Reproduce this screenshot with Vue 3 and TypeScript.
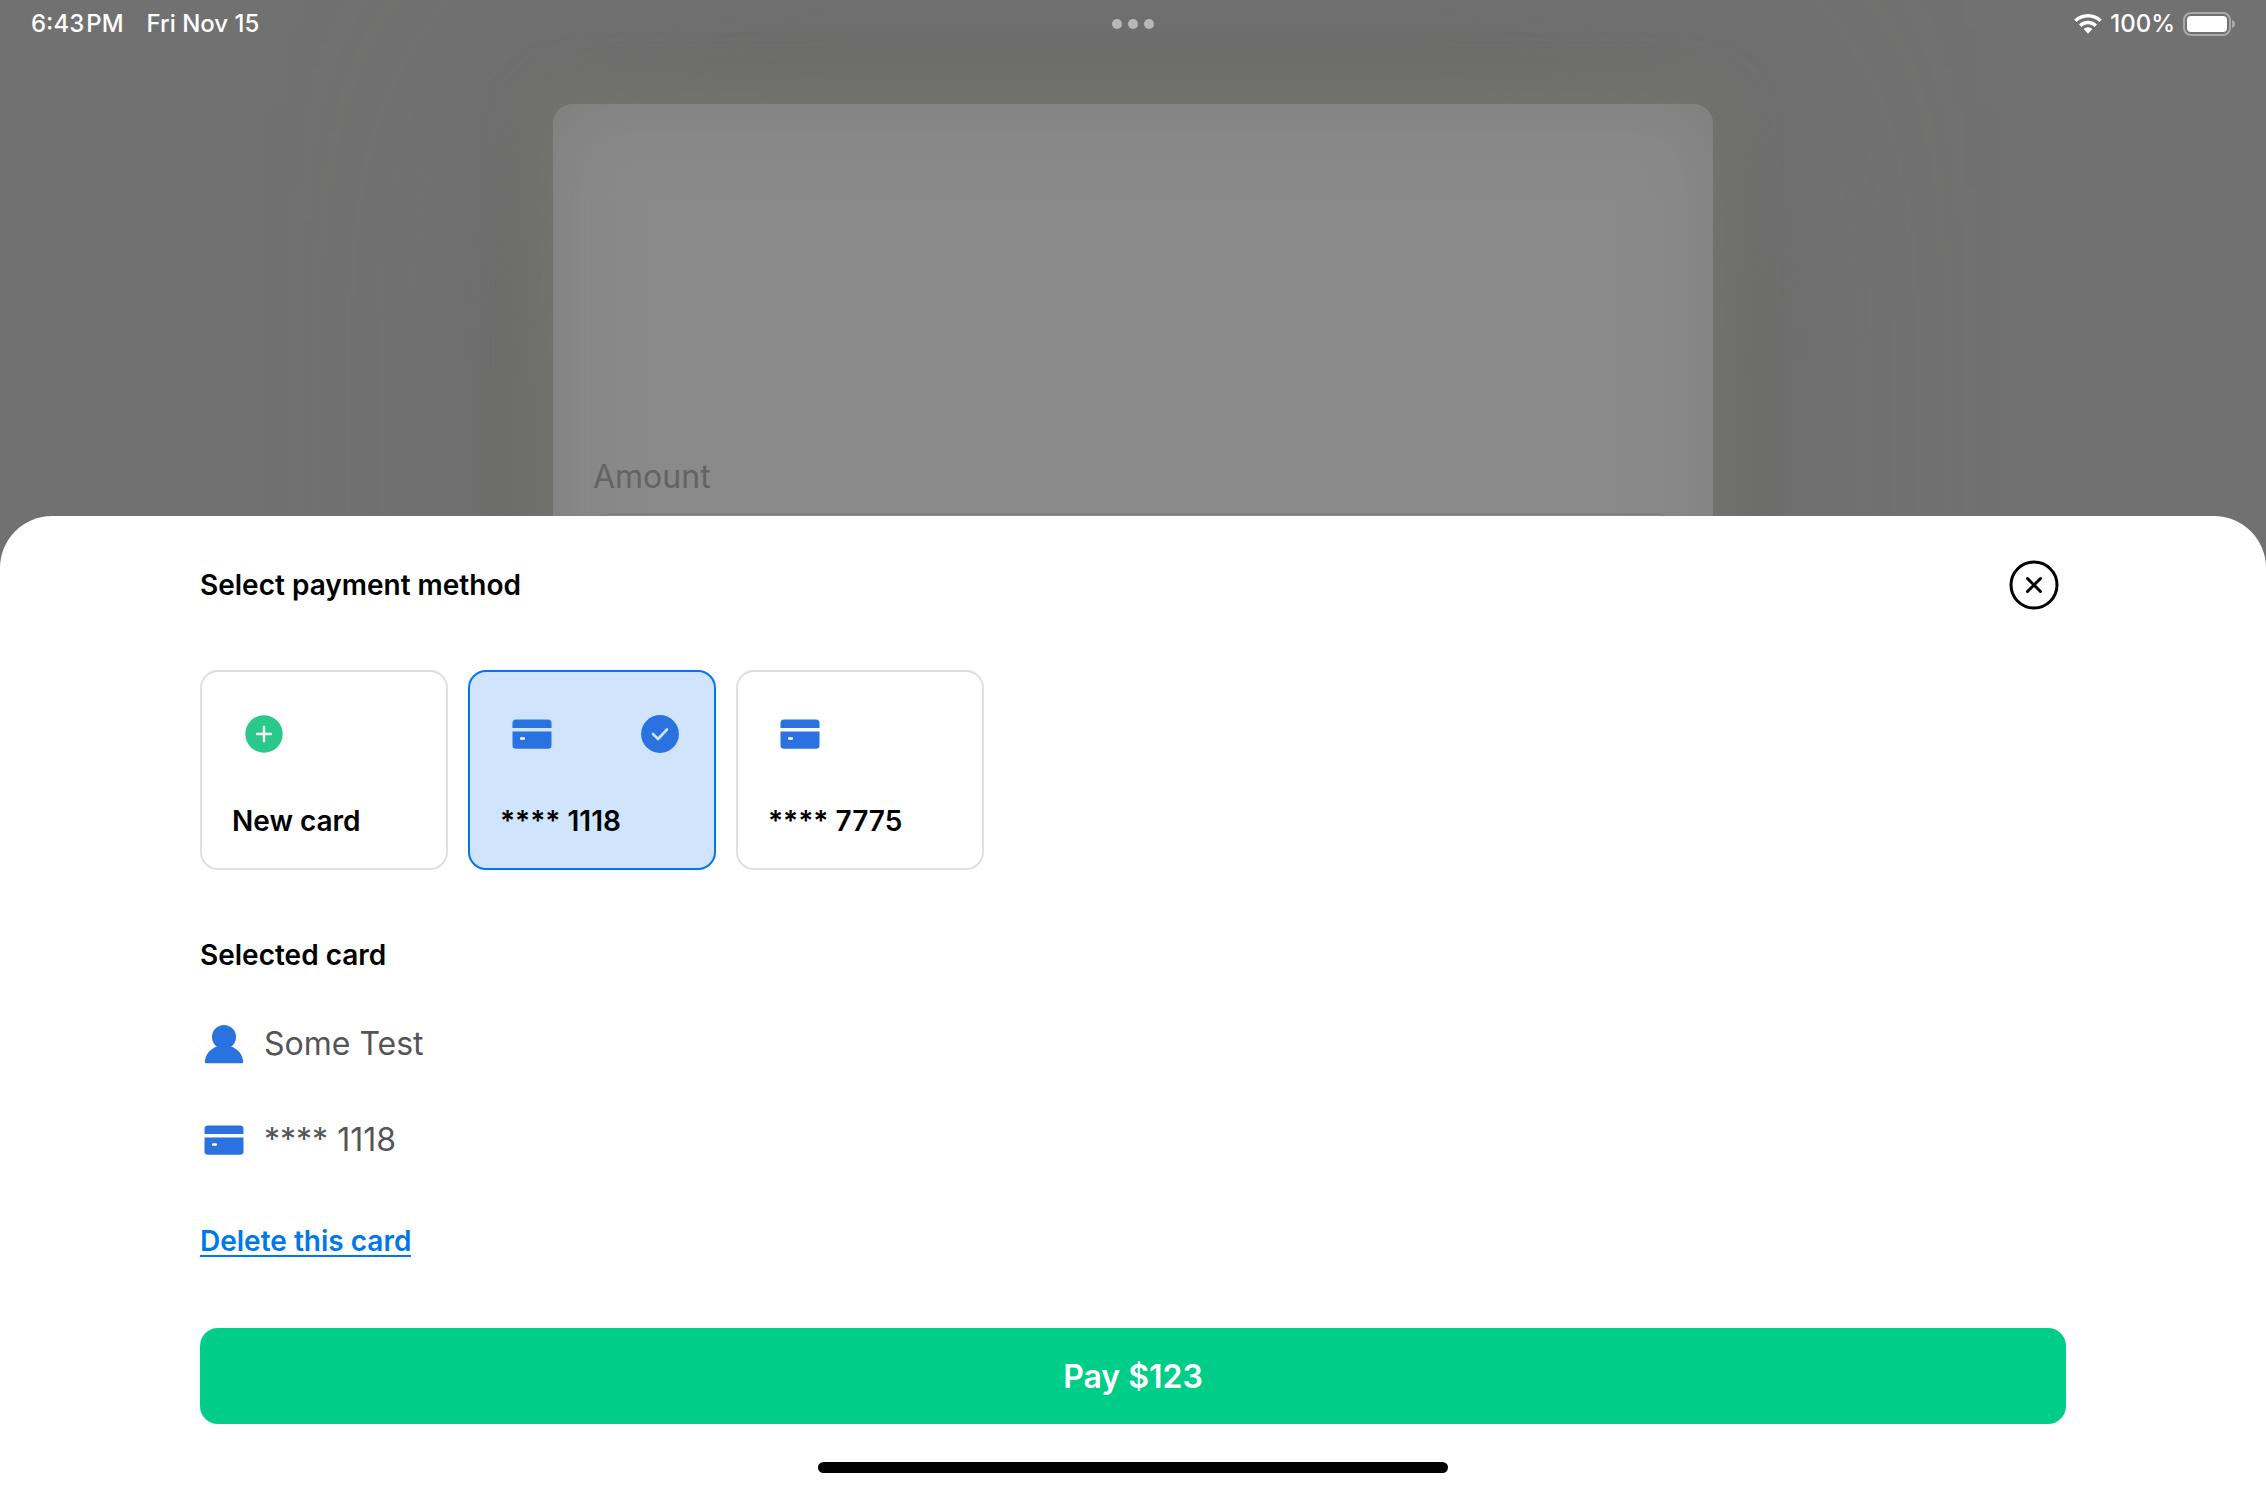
<script setup lang="ts">
import { computed, ref } from 'vue'

interface SavedCard {
  id: string
  holder: string
  label: string
}

const cards: SavedCard[] = [
  { id: 'card-1118', holder: 'Some Test', label: '**** 1118' },
  { id: 'card-7775', holder: 'Some Test', label: '**** 7775' },
]

const selectedId = ref<string>('card-1118')
const amount = ref<string>('')
const selected = computed<SavedCard>(() => cards.find((c) => c.id === selectedId.value) ?? cards[0])
</script>

<template>
  <div class="screen">
    <div class="stage">
      <header class="status">
        <div class="status-side">
          <span>6:43&#8202;PM</span>
          <span>Fri Nov 15</span>
        </div>
        <div class="dots"><i></i><i></i><i></i></div>
        <div class="status-side status-end">
          <svg class="wifi" viewBox="0 0 28 20" aria-hidden="true">
            <path d="M14 0C8.600 0 3.700 2.100.200 5.500L2.600 8C5.500 5.100 9.500 3.500 14 3.500S22.500 5.100 25.400 8L27.800 5.500C24.300 2.100 19.400 0 14 0Z" />
            <path d="M14 6.800C10.500 6.800 7.300 8.200 5 10.400L7.500 12.900C9.200 11.200 11.500 10.200 14 10.200S18.800 11.200 20.500 12.900L23 10.400C20.700 8.200 17.500 6.800 14 6.800Z" />
            <path d="M14 13.300C12.300 13.300 10.800 14 9.700 15.100L14 19.700L18.300 15.100C17.200 14 15.700 13.300 14 13.300Z" />
          </svg>
          <span class="charge">100%</span>
          <svg class="battery" viewBox="0 0 52 24" aria-hidden="true">
            <rect x="1" y="1" width="46" height="22" rx="7" fill="none" stroke="#a9a9a9" stroke-width="2" />
            <rect x="4" y="4" width="40" height="16" rx="4" />
            <path d="M49 8C51.500 8.800 52 10.200 52 12S51.500 15.200 49 16Z" fill="#a9a9a9" />
          </svg>
        </div>
      </header>

      <section class="panel">
        <label class="amount-label" for="amount">Amount</label>
        <input id="amount" v-model="amount" class="amount-input" type="text" />
      </section>
    </div>

    <main class="sheet">
      <div class="sheet-head">
        <h1 class="heading">Select payment method</h1>
        <button class="close" type="button" aria-label="Close">
          <svg viewBox="0 0 64 64" fill="none" stroke="#000" stroke-width="3" stroke-linecap="round">
            <circle cx="32" cy="32" r="23" />
            <path d="M25.500 25.500L38.500 38.500M38.500 25.500L25.500 38.500" />
          </svg>
        </button>
      </div>

      <div class="methods">
        <button class="method" type="button">
          <span class="method-icons">
            <svg class="icon" viewBox="0 0 48 48" aria-hidden="true">
              <circle cx="24" cy="24" r="18.700" fill="#2bc88c" />
              <path d="M24 17V31M17 24H31" stroke="#fff" stroke-width="2.400" stroke-linecap="round" />
            </svg>
          </span>
          <span>New card</span>
        </button>

        <label v-for="card in cards" :key="card.id" class="method" :class="{ chosen: card.id === selectedId }">
          <input v-model="selectedId" class="radio" type="radio" name="method" :value="card.id" />
          <span class="method-icons">
            <svg class="icon" viewBox="0 0 48 48" aria-hidden="true">
              <path d="M4.500 18V13Q4.500 9.500 8 9.500H40Q43.500 9.500 43.500 13V18Z" fill="#2972e0" />
              <path d="M4.500 21.500H43.500V35.500Q43.500 38.700 40 38.700H8Q4.500 38.700 4.500 35.500Z" fill="#2972e0" />
              <rect x="12" y="27.300" width="5" height="2.400" rx="1" fill="#fff" />
            </svg>
            <svg v-if="card.id === selectedId" class="icon" viewBox="0 0 48 48" aria-hidden="true">
              <circle cx="24" cy="24" r="18.900" fill="#2972e0" />
              <path d="M17 24L22 29L31 19.500" fill="none" stroke="#d0e4fc" stroke-width="2.600" stroke-linecap="round" stroke-linejoin="round" />
            </svg>
          </span>
          <span>{{ card.label }}</span>
        </label>
      </div>

      <h2 class="heading">Selected card</h2>
      <ul class="details">
        <li>
          <svg class="icon" viewBox="0 0 48 48" aria-hidden="true">
            <circle cx="24" cy="17" r="12" fill="#2972e0" />
            <path d="M17 26.500C10 29 5.500 34.500 4.800 41.500Q4.700 43.200 6 43.200H42Q43.300 43.200 43.200 41.500C42.500 34.500 38 29 31 26.500Z" fill="#2972e0" />
          </svg>
          <span>{{ selected.holder }}</span>
        </li>
        <li>
          <svg class="icon" viewBox="0 0 48 48" aria-hidden="true">
            <path d="M4.500 18V13Q4.500 9.500 8 9.500H40Q43.500 9.500 43.500 13V18Z" fill="#2972e0" />
            <path d="M4.500 21.500H43.500V35.500Q43.500 38.700 40 38.700H8Q4.500 38.700 4.500 35.500Z" fill="#2972e0" />
            <rect x="12" y="27.300" width="5" height="2.400" rx="1" fill="#fff" />
          </svg>
          <span>{{ selected.label }}</span>
        </li>
      </ul>

      <a class="delete" href="#delete">Delete this card</a>
      <button class="pay" type="button">Pay $123</button>
      <div class="home-bar"></div>
    </main>
  </div>
</template>

<style>
body {
  background: #717171;
}
</style>

<style scoped>
.screen {
  display: flex;
  flex-direction: column;
  height: 100vh;
  font-family: Inter, "Liberation Sans", sans-serif;
  color: #000;
}
.stage {
  flex: 1;
  display: flex;
  flex-direction: column;
  align-items: center;
  min-height: 300px;
  overflow: hidden;
}
.status {
  position: relative;
  z-index: 1;
  flex: none;
  display: grid;
  grid-template-columns: 1fr auto 1fr;
  align-items: center;
  box-sizing: border-box;
  width: 100%;
  height: 48px;
  padding: 0 31px;
  font-size: 24px;
  font-weight: 500;
  line-height: 32px;
  color: #fff;
}
.status-side {
  display: flex;
  align-items: center;
  gap: 23px;
}
.status-end {
  justify-content: flex-end;
  gap: 8px;
}
.wifi {
  width: 28px;
  height: 20px;
  fill: #fff;
}
.battery {
  width: 52px;
  height: 24px;
  fill: #fff;
}
.dots {
  display: flex;
  gap: 6px;
}
.dots i {
  width: 10px;
  height: 10px;
  border-radius: 50%;
  background: #b8b8b8;
}
.panel {
  flex: none;
  display: flex;
  flex-direction: column;
  box-sizing: border-box;
  width: 100%;
  max-width: 1160px;
  margin-top: 56px;
  padding: 353px 40px 300px;
  border-radius: 20px;
  background: #8a8a8a;
  box-shadow:
    inset 0 0 80px #7e7e7e,
    0 0 60px #787873,
    0 0 240px #676965;
}
.amount-label {
  font-size: 32px;
  line-height: 40px;
  color: #636363;
}
.amount-input {
  box-sizing: border-box;
  height: 96px;
  margin-top: 16px;
  padding: 0 32px;
  border: 2px solid #808080;
  border-radius: 16px;
  background: transparent;
  font: inherit;
  font-size: 32px;
}
.sheet {
  flex: none;
  display: flex;
  flex-direction: column;
  padding: 37px 200px 15px;
  border-radius: 52px 52px 0 0;
  background: #fff;
}
.sheet-head {
  display: flex;
  align-items: center;
  justify-content: space-between;
}
.heading {
  margin: 0;
  font-size: 28px;
  font-weight: 600;
  line-height: 40px;
}
.close {
  width: 64px;
  height: 64px;
  padding: 0;
  border: 0;
  background: none;
}
.close svg {
  display: block;
}
.methods {
  display: flex;
  gap: 20px;
  margin: 53px 0 65px;
}
.method {
  position: relative;
  display: flex;
  flex-direction: column;
  justify-content: space-between;
  box-sizing: border-box;
  width: 248px;
  height: 200px;
  padding: 38px 30px 27px;
  border: 2px solid #e0e0e0;
  border-radius: 18px;
  background: #fff;
  color: #000;
  font-family: inherit;
  font-size: 28px;
  font-weight: 600;
  line-height: 40px;
  text-align: left;
}
.method.chosen {
  border-color: #0078eb;
  background: #d0e4fc;
}
.method-icons {
  display: flex;
  justify-content: space-between;
  padding-left: 8px;
}
.radio {
  position: absolute;
  inset: 0;
  margin: 0;
  opacity: 0;
}
.icon {
  display: block;
  flex: none;
  width: 48px;
  height: 48px;
}
.details {
  display: flex;
  flex-direction: column;
  gap: 48px;
  margin: 45px 0 63px;
  padding: 0;
  list-style: none;
  font-size: 32px;
  line-height: 40px;
  color: #555;
}
.details li {
  display: flex;
  align-items: center;
  gap: 16px;
}
.delete {
  align-self: flex-start;
  border-bottom: 2px solid #0078eb;
  font-size: 28px;
  font-weight: 600;
  line-height: 28px;
  color: #0078eb;
  text-decoration: none;
}
.pay {
  height: 96px;
  margin: 71px 0 38px;
  border: 0;
  border-radius: 18px;
  background: #00ce88;
  color: #fff;
  font-family: inherit;
  font-size: 32px;
  font-weight: 600;
}
.home-bar {
  align-self: center;
  width: 100%;
  max-width: 630px;
  height: 11px;
  border-radius: 6px;
  background: #000;
}
</style>
